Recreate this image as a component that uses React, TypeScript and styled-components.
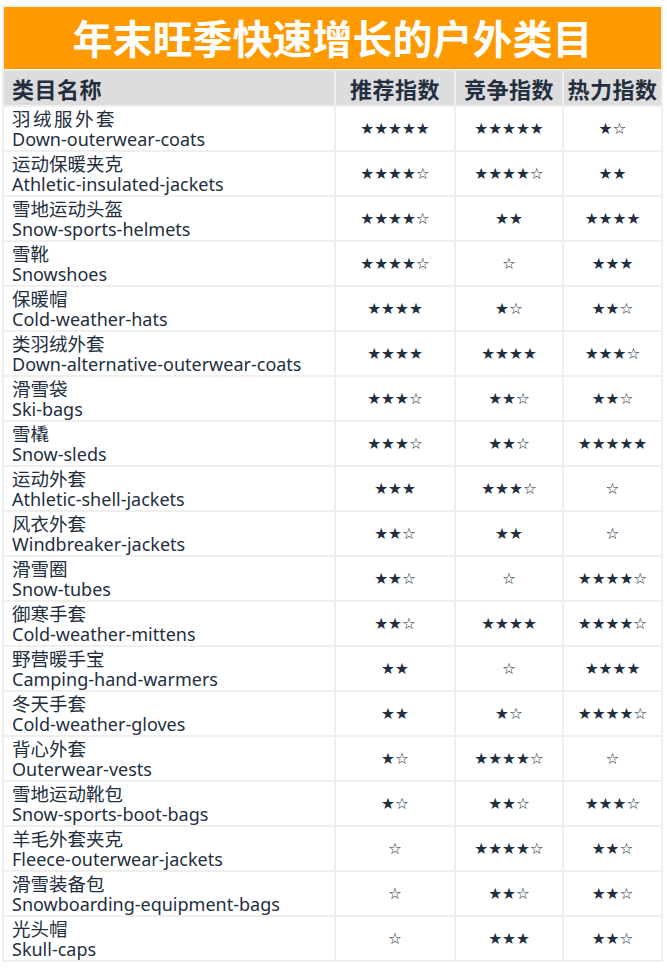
import { Fragment } from "react";
import styled, { createGlobalStyle } from "styled-components";

const GlobalStyle = createGlobalStyle`
  html, body {
    margin: 0;
    padding: 0;
    background: #ffffff;
  }
  body {
    font-family: "Noto Sans", "Noto Sans CJK SC", sans-serif;
    color: #232f3e;
  }
`;

type Row = {
  zh: string;
  en: string;
  rec: string;
  comp: string;
  heat: string;
  wide?: boolean;
};

const rows: Row[] = [
  { zh: "羽绒服外套", en: "Down-outerwear-coats", rec: "★★★★★", comp: "★★★★★", heat: "★☆", wide: true },
  { zh: "运动保暖夹克", en: "Athletic-insulated-jackets", rec: "★★★★☆", comp: "★★★★☆", heat: "★★" },
  { zh: "雪地运动头盔", en: "Snow-sports-helmets", rec: "★★★★☆", comp: "★★", heat: "★★★★" },
  { zh: "雪靴", en: "Snowshoes", rec: "★★★★☆", comp: "☆", heat: "★★★" },
  { zh: "保暖帽", en: "Cold-weather-hats", rec: "★★★★", comp: "★☆", heat: "★★☆" },
  { zh: "类羽绒外套", en: "Down-alternative-outerwear-coats", rec: "★★★★", comp: "★★★★", heat: "★★★☆" },
  { zh: "滑雪袋", en: "Ski-bags", rec: "★★★☆", comp: "★★☆", heat: "★★☆" },
  { zh: "雪橇", en: "Snow-sleds", rec: "★★★☆", comp: "★★☆", heat: "★★★★★" },
  { zh: "运动外套", en: "Athletic-shell-jackets", rec: "★★★", comp: "★★★☆", heat: "☆" },
  { zh: "风衣外套", en: "Windbreaker-jackets", rec: "★★☆", comp: "★★", heat: "☆" },
  { zh: "滑雪圈", en: "Snow-tubes", rec: "★★☆", comp: "☆", heat: "★★★★☆" },
  { zh: "御寒手套", en: "Cold-weather-mittens", rec: "★★☆", comp: "★★★★", heat: "★★★★☆" },
  { zh: "野营暖手宝", en: "Camping-hand-warmers", rec: "★★", comp: "☆", heat: "★★★★" },
  { zh: "冬天手套", en: "Cold-weather-gloves", rec: "★★", comp: "★☆", heat: "★★★★☆" },
  { zh: "背心外套", en: "Outerwear-vests", rec: "★☆", comp: "★★★★☆", heat: "☆" },
  { zh: "雪地运动靴包", en: "Snow-sports-boot-bags", rec: "★☆", comp: "★★☆", heat: "★★★☆" },
  { zh: "羊毛外套夹克", en: "Fleece-outerwear-jackets", rec: "☆", comp: "★★★★☆", heat: "★★☆" },
  { zh: "滑雪装备包", en: "Snowboarding-equipment-bags", rec: "☆", comp: "★★☆", heat: "★★☆" },
  { zh: "光头帽", en: "Skull-caps", rec: "☆", comp: "★★★", heat: "★★☆" },
];

const Page = styled.div`
  padding: 5px 4px 0 2px;
`;

const Table = styled.div`
  display: grid;
  grid-template-columns: 330px 118px 106px 97px;
  gap: 2px;
  padding: 2px;
  width: fit-content;
  background: #efefef;
`;

const TitleBar = styled.div`
  grid-column: 1 / -1;
  height: 62px;
  background: #ff9900;
  color: #ffffff;
  display: flex;
  align-items: center;
  justify-content: center;
  font-family: "Noto Sans CJK SC", sans-serif;
  font-weight: 700;
  font-size: 40px;
  line-height: 1;
  padding-bottom: 2px;
  box-sizing: border-box;
`;

const HeadCell = styled.div<{ $align?: "left" | "center" }>`
  height: 34px;
  background: #dddddd;
  display: flex;
  align-items: center;
  justify-content: ${(p) => (p.$align === "left" ? "flex-start" : "center")};
  padding-left: ${(p) => (p.$align === "left" ? "8px" : "0")};
  font-family: "Noto Sans CJK SC", sans-serif;
  font-weight: 700;
  font-size: 22px;
  letter-spacing: 0.5px;
  color: #232f3e;
`;

const NameCell = styled.div`
  height: 43px;
  background: #ffffff;
  padding-left: 8px;
  display: flex;
  flex-direction: column;
  justify-content: center;
`;

const ZhName = styled.div<{ $wide?: boolean }>`
  height: 21px;
  font-family: "Noto Sans CJK SC", sans-serif;
  font-size: 18.5px;
  line-height: 21px;
  letter-spacing: ${(p) => (p.$wide ? "2.5px" : "0")};
  color: #232f3e;
`;

const EnName = styled.div`
  height: 21px;
  font-family: "Noto Sans", sans-serif;
  font-size: 18px;
  line-height: 21px;
  color: #232f3e;
`;

const StarCell = styled.div`
  height: 43px;
  background: #ffffff;
  display: flex;
  align-items: center;
  justify-content: center;
  font-family: "DejaVu Sans", sans-serif;
  font-size: 15.5px;
  color: #232f3e;
`;

export default function App() {
  return (
    <>
      <GlobalStyle />
      <Page>
        <Table>
          <TitleBar>年末旺季快速增长的户外类目</TitleBar>
          <HeadCell $align="left">类目名称</HeadCell>
          <HeadCell>推荐指数</HeadCell>
          <HeadCell>竞争指数</HeadCell>
          <HeadCell>热力指数</HeadCell>
          {rows.map((r) => (
            <Fragment key={r.en}>
              <NameCell>
                <ZhName $wide={r.wide}>{r.zh}</ZhName>
                <EnName>{r.en}</EnName>
              </NameCell>
              <StarCell>{r.rec}</StarCell>
              <StarCell>{r.comp}</StarCell>
              <StarCell>{r.heat}</StarCell>
            </Fragment>
          ))}
        </Table>
      </Page>
    </>
  );
}
